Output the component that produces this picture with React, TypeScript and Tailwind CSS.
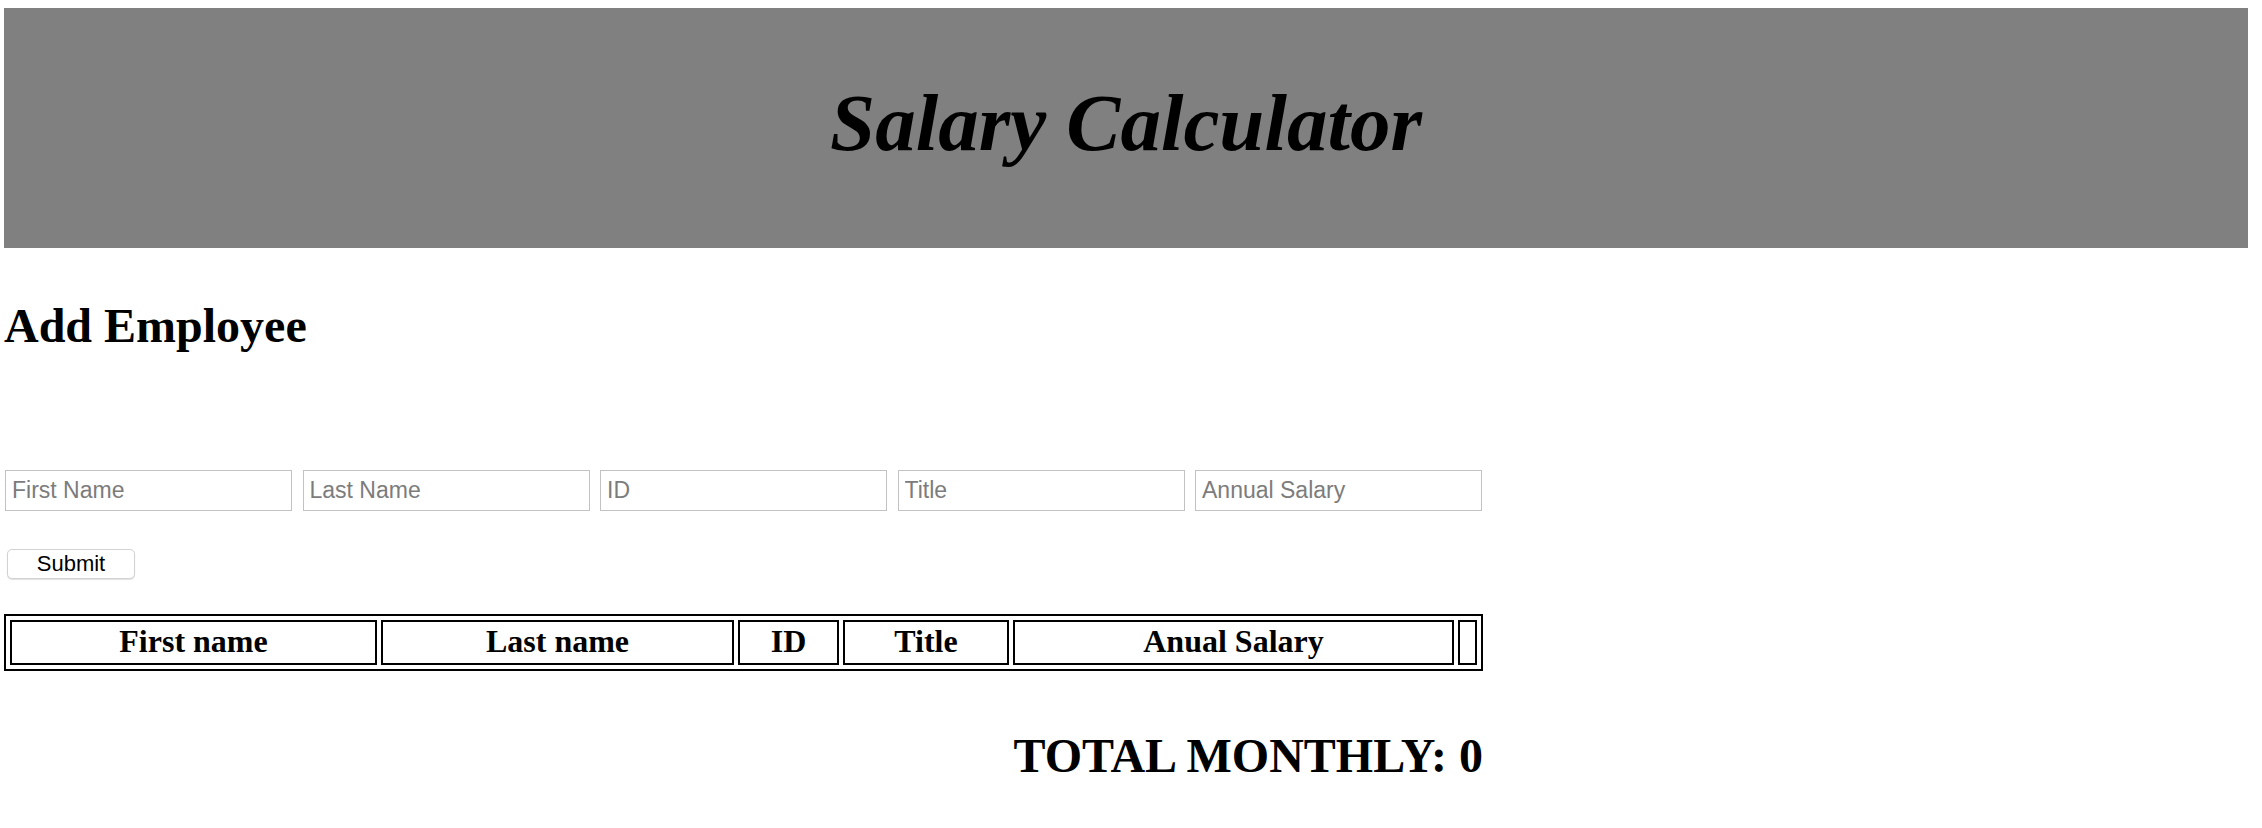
import React, { useState } from "react";

type Employee = {
	firstName: string;
	lastName: string;
	id: string;
	title: string;
	salary: number;
};

const fields = [
	{ key: "firstName", placeholder: "First Name" },
	{ key: "lastName", placeholder: "Last Name" },
	{ key: "id", placeholder: "ID" },
	{ key: "title", placeholder: "Title" },
	{ key: "salary", placeholder: "Annual Salary" },
] as const;

const emptyForm = { firstName: "", lastName: "", id: "", title: "", salary: "" };

export default function App() {
	const [form, setForm] = useState(emptyForm);
	const [employees, setEmployees] = useState<Employee[]>([]);

	const totalMonthly = Math.round(
		employees.reduce((sum, e) => sum + e.salary, 0) / 12
	);

	const handleSubmit = (e: React.FormEvent) => {
		e.preventDefault();
		setEmployees((prev) => [...prev, { ...form, salary: Number(form.salary) || 0 }]);
		setForm(emptyForm);
	};

	const removeEmployee = (index: number) => {
		setEmployees((prev) => prev.filter((_, i) => i !== index));
	};

	return (
		<div className="min-h-screen bg-white pl-[4px] text-black font-['Liberation_Serif','Times_New_Roman',serif]">
			<header className="mt-[8px] h-[240px] w-[2244px] bg-[#808080] pt-[70px] text-center">
				<h1 className="text-[81px] leading-[91px] font-bold italic">Salary Calculator</h1>
			</header>

			<main className="w-[1479px]">
				<h2 className="mt-[51px] text-[48px] leading-[53px] font-bold">Add Employee</h2>

				<form onSubmit={handleSubmit} className="mt-[118px] font-['Liberation_Sans',Arial,sans-serif]">
					<div className="flex justify-between px-[1px]">
						{fields.map((f) => (
							<input
								key={f.key}
								type={f.key === "salary" ? "number" : "text"}
								placeholder={f.placeholder}
								value={form[f.key]}
								onChange={(e) => setForm({ ...form, [f.key]: e.target.value })}
								className="h-[41px] w-[287px] border border-[#c2c2c2] bg-white px-[6px] text-[23px] outline-none placeholder:text-[#7c7c7c]"
							/>
						))}
					</div>
					<button
						type="submit"
						className="mt-[38px] ml-[3px] block h-[30px] w-[128px] rounded-[5px] border border-[#d2d2d2] bg-white text-[22px] leading-none text-black shadow-[0_1px_1px_rgba(0,0,0,0.12)]"
					>
						Submit
					</button>
				</form>

				<table className="mt-[35px] w-[1479px] table-fixed border-separate border-spacing-[4px] border-2 border-black">
					<thead>
						<tr>
							<th className="w-[367px] border-2 border-black pt-[1px] pb-[3px] text-[32px] leading-[37px] font-bold">First name</th>
							<th className="w-[353px] border-2 border-black pt-[1px] pb-[3px] text-[32px] leading-[37px] font-bold">Last name</th>
							<th className="w-[101px] border-2 border-black pt-[1px] pb-[3px] text-[32px] leading-[37px] font-bold">ID</th>
							<th className="w-[166px] border-2 border-black pt-[1px] pb-[3px] text-[32px] leading-[37px] font-bold">Title</th>
							<th className="w-[441px] border-2 border-black pt-[1px] pb-[3px] text-[32px] leading-[37px] font-bold">Anual Salary</th>
							<th className="w-[19px] border-2 border-black pt-[1px] pb-[3px] text-[32px] leading-[37px] font-bold"></th>
						</tr>
					</thead>
					<tbody>
						{employees.map((emp, i) => (
							<tr key={i} className="text-[24px]">
								<td className="border-2 border-black px-2">{emp.firstName}</td>
								<td className="border-2 border-black px-2">{emp.lastName}</td>
								<td className="border-2 border-black px-2">{emp.id}</td>
								<td className="border-2 border-black px-2">{emp.title}</td>
								<td className="border-2 border-black px-2">{emp.salary}</td>
								<td className="border-2 border-black">
									<button onClick={() => removeEmployee(i)}>x</button>
								</td>
							</tr>
						))}
					</tbody>
				</table>

				<h2 className="mt-[58px] text-right text-[48px] leading-[53px] font-bold">
					TOTAL MONTHLY: {totalMonthly}
				</h2>
			</main>
		</div>
	);
}
